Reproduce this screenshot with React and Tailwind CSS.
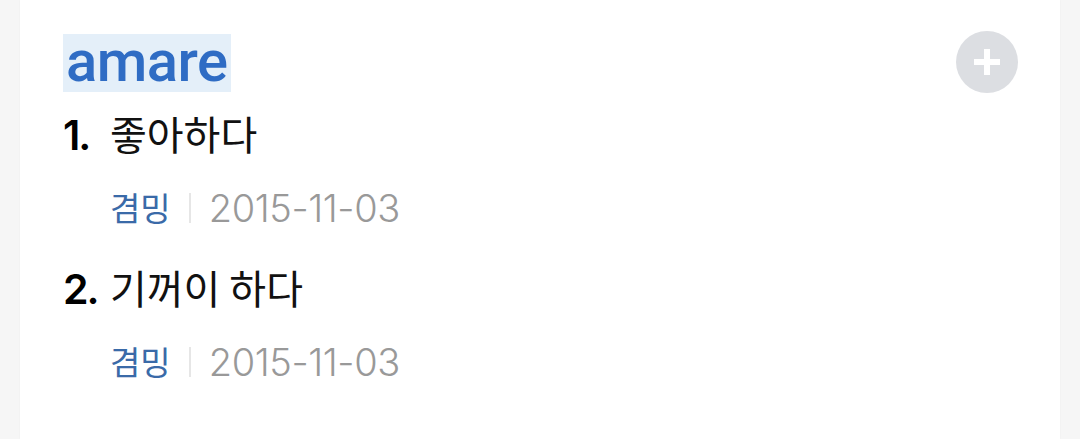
import React from 'react';

const entries = [
  { no: 1, meaning: '좋아하다', author: '겸밍', date: '2015-11-03' },
  { no: 2, meaning: '기꺼이 하다', author: '겸밍', date: '2015-11-03' },
];

const kr = { fontFamily: '"Noto Sans CJK KR", "Noto Sans", sans-serif' };

const PlusButton = () => (
  <button className="w-[62px] h-[62px] rounded-full bg-[#dcdee2] flex items-center justify-center mt-[-3px]">
    <svg width="32" height="32" viewBox="0 0 32 32">
      <path d="M16 3v26M3 16h26" stroke="#fff" strokeWidth="6" />
    </svg>
  </button>
);

export default function App() {
  return (
    <div className="h-[439px] overflow-hidden bg-[#f6f6f6] px-[20px]">
      <div className="h-full bg-white pl-[43px] pr-[42px] pt-[34px] shadow-[0_0_2px_rgba(0,0,0,0.04)]">
        {/* Word header */}
        <div className="flex items-start justify-between">
          <span
            className="h-[58px] px-[3px] bg-[#e4eff9] text-[#2f6cc4] text-[58px] leading-[54px] font-medium tracking-[-0.5px]"
            style={{ fontFamily: 'Roboto, "Noto Sans", sans-serif' }}
          >
            amare
          </span>
          <PlusButton />
        </div>

        {/* Meanings */}
        <ol className="mt-[10px]">
          {entries.map((e) => (
            <li key={e.no} className="mb-[32px]">
              <div className="flex items-baseline h-[48px]">
                <span
                  className="w-[47px] text-[41px] font-semibold text-black tracking-[-2px]"
                  style={{ fontFamily: 'Inter, Roboto, sans-serif' }}
                >
                  {e.no}.
                </span>
                <span className="text-[40px] text-[#111]" style={kr}>
                  {e.meaning}
                </span>
              </div>
              <div className="flex items-center pl-[47px] mt-[40px] h-[34px]">
                <span className="text-[33px] text-[#3a6aa8]" style={kr}>
                  {e.author}
                </span>
                <span className="w-[2px] h-[30px] bg-[#e6e6e6] mx-[18px]" />
                <span
                  className="text-[38px] font-light text-[#999] tracking-[-0.4px]"
                  style={{ fontFamily: 'Inter, Roboto, sans-serif' }}
                >
                  {e.date}
                </span>
              </div>
            </li>
          ))}
        </ol>
      </div>
    </div>
  );
}
